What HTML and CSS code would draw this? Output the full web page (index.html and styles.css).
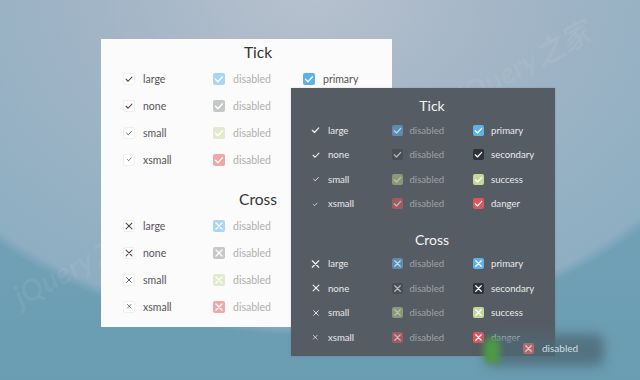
FILE: index.html
```html
<!DOCTYPE html>
<html>
  <head>
    <link rel="stylesheet" href="styles.css">
  </head>
  <body>
    <div class="stage">
      <span class="mark mark-1">jQuery之家</span>
      <span class="mark mark-2">jQuery之家</span>

      <div class="panel panel-light">
        <div class="section">
          <h2>Tick</h2>
          <div class="grid">
            <div class="item"><span class="box plain lg"><svg viewBox="0 0 12 12"><path d="M2.5 6.3l2.4 2.4 4.6-5"/></svg></span>large</div>
            <div class="item off"><span class="box blue"><svg class="lg" viewBox="0 0 12 12"><path d="M2.5 6.3l2.4 2.4 4.6-5"/></svg></span>disabled</div>
            <div class="item"><span class="box primary"><svg class="lg" viewBox="0 0 12 12"><path d="M2.5 6.3l2.4 2.4 4.6-5"/></svg></span>primary</div>

            <div class="item"><span class="box plain md"><svg viewBox="0 0 12 12"><path d="M2.5 6.3l2.4 2.4 4.6-5"/></svg></span>none</div>
            <div class="item off"><span class="box grey"><svg class="lg" viewBox="0 0 12 12"><path d="M2.5 6.3l2.4 2.4 4.6-5"/></svg></span>disabled</div>
            <div class="item"></div>

            <div class="item"><span class="box plain sm"><svg viewBox="0 0 12 12"><path d="M2.5 6.3l2.4 2.4 4.6-5"/></svg></span>small</div>
            <div class="item off"><span class="box green"><svg class="lg" viewBox="0 0 12 12"><path d="M2.5 6.3l2.4 2.4 4.6-5"/></svg></span>disabled</div>
            <div class="item"></div>

            <div class="item"><span class="box plain xs"><svg viewBox="0 0 12 12"><path d="M2.5 6.3l2.4 2.4 4.6-5"/></svg></span>xsmall</div>
            <div class="item off"><span class="box red"><svg class="lg" viewBox="0 0 12 12"><path d="M2.5 6.3l2.4 2.4 4.6-5"/></svg></span>disabled</div>
            <div class="item"></div>
          </div>
        </div>

        <div class="section">
          <h2>Cross</h2>
          <div class="grid">
            <div class="item"><span class="box plain lg"><svg viewBox="0 0 12 12"><path d="M2.5 2.5l7 7M9.5 2.5l-7 7"/></svg></span>large</div>
            <div class="item off"><span class="box blue"><svg class="lg" viewBox="0 0 12 12"><path d="M3 3l6 6M9 3l-6 6"/></svg></span>disabled</div>
            <div class="item"></div>

            <div class="item"><span class="box plain md"><svg viewBox="0 0 12 12"><path d="M2.5 2.5l7 7M9.5 2.5l-7 7"/></svg></span>none</div>
            <div class="item off"><span class="box grey"><svg class="lg" viewBox="0 0 12 12"><path d="M3 3l6 6M9 3l-6 6"/></svg></span>disabled</div>
            <div class="item"></div>

            <div class="item"><span class="box plain sm"><svg viewBox="0 0 12 12"><path d="M2.5 2.5l7 7M9.5 2.5l-7 7"/></svg></span>small</div>
            <div class="item off"><span class="box green"><svg class="lg" viewBox="0 0 12 12"><path d="M3 3l6 6M9 3l-6 6"/></svg></span>disabled</div>
            <div class="item"></div>

            <div class="item"><span class="box plain xs"><svg viewBox="0 0 12 12"><path d="M2.5 2.5l7 7M9.5 2.5l-7 7"/></svg></span>xsmall</div>
            <div class="item off"><span class="box red"><svg class="lg" viewBox="0 0 12 12"><path d="M3 3l6 6M9 3l-6 6"/></svg></span>disabled</div>
            <div class="item"></div>
          </div>
        </div>
      </div>

      <div class="panel panel-dark">
        <div class="section">
          <h2>Tick</h2>
          <div class="grid">
            <div class="item"><span class="box plain lg"><svg viewBox="0 0 12 12"><path d="M2.5 6.3l2.4 2.4 4.6-5"/></svg></span>large</div>
            <div class="item off"><span class="box blue"><svg class="lg" viewBox="0 0 12 12"><path d="M2.5 6.3l2.4 2.4 4.6-5"/></svg></span>disabled</div>
            <div class="item"><span class="box primary"><svg class="lg" viewBox="0 0 12 12"><path d="M2.5 6.3l2.4 2.4 4.6-5"/></svg></span>primary</div>

            <div class="item"><span class="box plain md"><svg viewBox="0 0 12 12"><path d="M2.5 6.3l2.4 2.4 4.6-5"/></svg></span>none</div>
            <div class="item off"><span class="box grey"><svg class="lg" viewBox="0 0 12 12"><path d="M2.5 6.3l2.4 2.4 4.6-5"/></svg></span>disabled</div>
            <div class="item"><span class="box secondary"><svg class="lg" viewBox="0 0 12 12"><path d="M2.5 6.3l2.4 2.4 4.6-5"/></svg></span>secondary</div>

            <div class="item"><span class="box plain sm"><svg viewBox="0 0 12 12"><path d="M2.5 6.3l2.4 2.4 4.6-5"/></svg></span>small</div>
            <div class="item off"><span class="box green"><svg class="lg" viewBox="0 0 12 12"><path d="M2.5 6.3l2.4 2.4 4.6-5"/></svg></span>disabled</div>
            <div class="item"><span class="box success"><svg class="lg" viewBox="0 0 12 12"><path d="M2.5 6.3l2.4 2.4 4.6-5"/></svg></span>success</div>

            <div class="item"><span class="box plain xs"><svg viewBox="0 0 12 12"><path d="M2.5 6.3l2.4 2.4 4.6-5"/></svg></span>xsmall</div>
            <div class="item off"><span class="box red"><svg class="lg" viewBox="0 0 12 12"><path d="M2.5 6.3l2.4 2.4 4.6-5"/></svg></span>disabled</div>
            <div class="item"><span class="box danger"><svg class="lg" viewBox="0 0 12 12"><path d="M2.5 6.3l2.4 2.4 4.6-5"/></svg></span>danger</div>
          </div>
        </div>

        <div class="section">
          <h2>Cross</h2>
          <div class="grid">
            <div class="item"><span class="box plain lg"><svg viewBox="0 0 12 12"><path d="M2.5 2.5l7 7M9.5 2.5l-7 7"/></svg></span>large</div>
            <div class="item off"><span class="box blue"><svg class="lg" viewBox="0 0 12 12"><path d="M3 3l6 6M9 3l-6 6"/></svg></span>disabled</div>
            <div class="item"><span class="box primary"><svg class="lg" viewBox="0 0 12 12"><path d="M3 3l6 6M9 3l-6 6"/></svg></span>primary</div>

            <div class="item"><span class="box plain md"><svg viewBox="0 0 12 12"><path d="M2.5 2.5l7 7M9.5 2.5l-7 7"/></svg></span>none</div>
            <div class="item off"><span class="box grey"><svg class="lg" viewBox="0 0 12 12"><path d="M3 3l6 6M9 3l-6 6"/></svg></span>disabled</div>
            <div class="item"><span class="box secondary"><svg class="lg" viewBox="0 0 12 12"><path d="M3 3l6 6M9 3l-6 6"/></svg></span>secondary</div>

            <div class="item"><span class="box plain sm"><svg viewBox="0 0 12 12"><path d="M2.5 2.5l7 7M9.5 2.5l-7 7"/></svg></span>small</div>
            <div class="item off"><span class="box green"><svg class="lg" viewBox="0 0 12 12"><path d="M3 3l6 6M9 3l-6 6"/></svg></span>disabled</div>
            <div class="item"><span class="box success"><svg class="lg" viewBox="0 0 12 12"><path d="M3 3l6 6M9 3l-6 6"/></svg></span>success</div>

            <div class="item"><span class="box plain xs"><svg viewBox="0 0 12 12"><path d="M2.5 2.5l7 7M9.5 2.5l-7 7"/></svg></span>xsmall</div>
            <div class="item off"><span class="box red"><svg class="lg" viewBox="0 0 12 12"><path d="M3 3l6 6M9 3l-6 6"/></svg></span>disabled</div>
            <div class="item"><span class="box danger"><svg class="lg" viewBox="0 0 12 12"><path d="M3 3l6 6M9 3l-6 6"/></svg></span>danger</div>
          </div>
        </div>
      </div>

      <div class="ghost">
        <span class="ghost-blob"></span>
        <span class="box red"><svg class="lg" viewBox="0 0 12 12"><path d="M3 3l6 6M9 3l-6 6"/></svg></span>
        <span class="ghost-text">disabled</span>
      </div>
    </div>
  </body>
</html>
```

FILE: styles.css
```css
body {
  margin: 0;
  font-family: Lato, "Open Sans", "Noto Sans CJK SC", sans-serif;
}

.stage {
  position: relative;
  width: 640px;
  height: 380px;
  overflow: hidden;
  background:
    radial-gradient(ellipse 460px 345px at 310px -10px, #b7c1ce 0%, #a2b5c6 45%, #8eaec2 97%, rgba(142, 174, 194, 0) 100%),
    linear-gradient(180deg, #7aa6ba 0%, #6a9db2 100%);
}

/* faint watermark text */
.mark {
  position: absolute;
  font-size: 30px;
  font-weight: 700;
  font-style: italic;
  color: rgba(255, 255, 255, 0.06);
  transform: rotate(-28deg);
  white-space: nowrap;
}

.mark-1 { left: 6px; top: 240px; }
.mark-2 { left: 450px; top: 40px; }

.panel {
  position: absolute;
  box-sizing: border-box;
}

.panel-light {
  left: 101px;
  top: 39px;
  width: 291px;
  height: 288px;
  padding-left: 22px;
  background-color: #fbfbfb;
}

.panel-dark {
  left: 291px;
  top: 88px;
  width: 264px;
  height: 268px;
  padding: 6px 0 0 19px;
  background-color: #565c63;
  box-shadow: 0 0 2px rgba(0, 0, 0, 0.15);
}

.section h2 {
  margin: 0;
  width: 270px;
  text-align: center;
  font-weight: 400;
  font-size: 15.5px;
  line-height: 26px;
  color: #333;
}

.section + .section {
  margin-top: 13px;
}

.grid {
  display: grid;
  grid-template-columns: repeat(3, 90px);
  grid-auto-rows: 27px;
}

.item {
  display: flex;
  align-items: center;
  gap: 8px;
  font-size: 10.5px;
  color: #555;
}

.item.off {
  color: #b0b0b0;
}

.box {
  display: flex;
  align-items: center;
  justify-content: center;
  flex: none;
  width: 12px;
  height: 12px;
  border-radius: 2px;
  box-sizing: border-box;
  color: #fff;
}

.box svg {
  fill: none;
  stroke: currentColor;
  stroke-width: 1.3;
  stroke-linecap: round;
  stroke-linejoin: round;
}

.box svg.lg {
  width: 12px;
  height: 12px;
}

.box.plain {
  border: 1px solid #efefef;
  background-color: #fff;
  color: #4a4a4a;
}

.box.plain.lg svg { width: 12px; height: 12px; }
.box.plain.md svg { width: 10px; height: 10px; }
.box.plain.sm svg { width: 8px; height: 8px; }
.box.plain.xs svg { width: 6.5px; height: 6.5px; }

.box.blue { background-color: #a9d6f5; }
.box.grey { background-color: #c6c7c9; }
.box.green { background-color: #e1eacf; }
.box.red { background-color: #f0a7a8; }

.box.primary { background-color: #5eb2ea; }
.box.secondary { background-color: #2e3238; }
.box.success { background-color: #c6d897; }
.box.danger { background-color: #e0545b; }

/* dark panel overrides */
.panel-dark .section h2 {
  width: 244px;
  font-size: 14px;
  line-height: 24px;
  color: #f4f4f4;
}

.panel-dark .section + .section {
  margin-top: 11.5px;
}

.panel-dark .grid {
  grid-template-columns: repeat(3, 81.5px);
  grid-auto-rows: 24.5px;
}

.panel-dark .item {
  gap: 7px;
  font-size: 9.6px;
  color: #e8e9ea;
}

.panel-dark .item.off {
  color: #9da2a7;
}

.panel-dark .box {
  width: 11px;
  height: 11px;
}

.panel-dark .box svg.lg {
  width: 11px;
  height: 11px;
}

.panel-dark .box.plain {
  border: none;
  background-color: transparent;
  color: #f2f2f2;
}

.panel-dark .box.blue { background-color: #5b8db0; color: #c8d8e4; }
.panel-dark .box.grey { background-color: #4a4f56; color: #b8bcc0; }
.panel-dark .box.green { background-color: #8b9878; color: #b9c2ad; }
.panel-dark .box.red { background-color: #a05a61; color: #d7b2b5; }

/* blurred floating tooltip at the bottom */
.ghost {
  position: absolute;
  left: 486px;
  top: 334px;
  width: 118px;
  height: 28px;
  display: flex;
  align-items: center;
  gap: 8px;
  padding-left: 37px;
  box-sizing: border-box;
}

.ghost::before {
  content: "";
  position: absolute;
  left: 0;
  top: 0;
  right: 0;
  bottom: -4px;
  border-radius: 8px;
  background-color: rgba(78, 104, 116, 0.8);
  filter: blur(6px);
}

.ghost-blob {
  position: absolute;
  left: -2px;
  top: 4px;
  width: 16px;
  height: 26px;
  border-radius: 8px;
  background-color: #4d9a43;
  filter: blur(3px);
}

.ghost .box {
  position: relative;
  width: 11px;
  height: 11px;
  background-color: #b06a6c;
  color: #e5c8c9;
}

.ghost .box svg.lg {
  width: 11px;
  height: 11px;
}

.ghost-text {
  position: relative;
  font-size: 10px;
  color: #d4dde2;
}
```
